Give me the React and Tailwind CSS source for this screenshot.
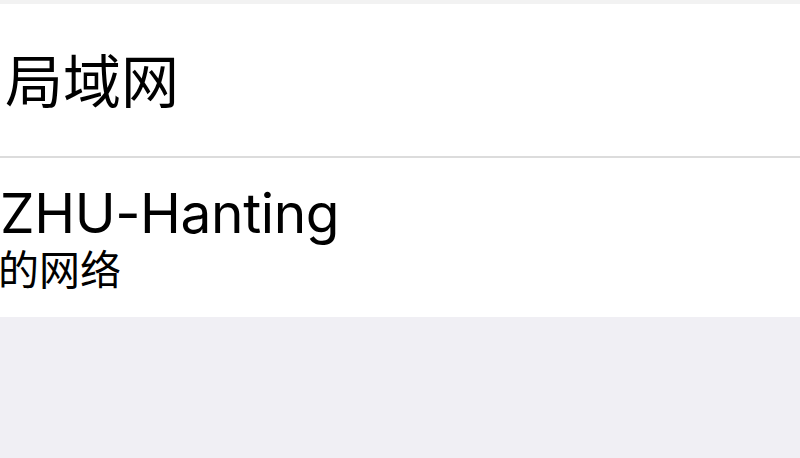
export default function App() {
  const cjk = { fontFamily: '"Noto Sans CJK SC", "Noto Sans", sans-serif' };
  return (
    <div className="w-[800px] h-[458px] bg-[#f0eff4] flex flex-col overflow-hidden">
      <div className="h-[4px] bg-[#f2f2f2]" />
      <div className="bg-white flex flex-col">
        <div className="h-[152px] flex items-center pl-[5px] pb-[4px]">
          <span className="text-[58px] leading-none text-black" style={cjk}>局域网</span>
        </div>
        <div className="h-[2px] bg-[#dcdcdc]" />
        <div className="h-[159px] flex flex-col justify-center pb-[2px]">
          <div className="text-[55px] leading-none text-black font-['Inter',sans-serif] tracking-[-0.4px]">ZHU-Hanting</div>
          <div className="text-[41px] leading-none text-black mt-[6px] -ml-[2px]" style={cjk}>的网络</div>
        </div>
      </div>
      <div className="flex-1" />
    </div>
  );
}
